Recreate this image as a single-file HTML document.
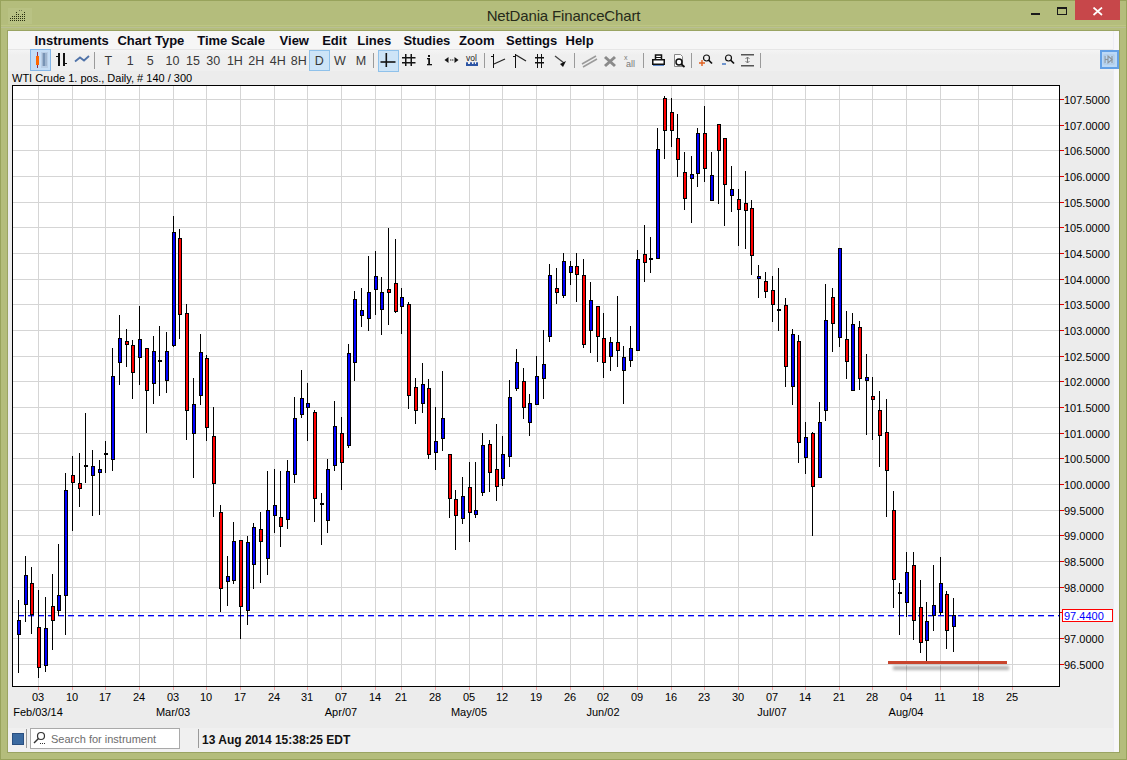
<!DOCTYPE html>
<html><head><meta charset="utf-8">
<style>
*{margin:0;padding:0;box-sizing:border-box}
html,body{width:1127px;height:760px;overflow:hidden;background:#b4bd7c;font-family:"Liberation Sans",sans-serif}
.abs{position:absolute}
#frame{position:absolute;left:0;top:0;width:1127px;height:760px;background:#b4bd7c;border:1px solid #98a35c}
#title{position:absolute;left:0;top:7px;width:1127px;text-align:center;font-size:15px;letter-spacing:-0.15px;color:#262a1a}
#client{position:absolute;left:8px;top:31px;width:1111px;height:721px;background:#ececec}
#menubar{position:absolute;left:8px;top:31px;width:1111px;height:19px;background:#f6f6f6;border-bottom:1px solid #e6e6e6}
#toolbar{position:absolute;left:8px;top:50px;width:1111px;height:21px;background:linear-gradient(#f4f4f4,#efefef 25%,#efefef)}
#status{position:absolute;left:8px;top:728px;width:1111px;height:24px;background:#f0f0f0}
.mi{position:absolute;top:33px;font-size:13px;font-weight:bold;color:#0a0a14;white-space:nowrap}
.tt{position:absolute;top:54px;font-size:12.5px;color:#383838;white-space:nowrap}
.sel{position:absolute;background:#cde4f7;border:1px solid #8fc1ea}
.sep{position:absolute;width:1px;background:#9a9a9a}
.yl{position:absolute;left:1064px;font-size:11px;color:#000;white-space:nowrap;line-height:14px}
.xl{position:absolute;top:690px;width:40px;text-align:center;font-size:11px;color:#000;line-height:14px}
.ml{position:absolute;top:705px;width:80px;text-align:center;font-size:11px;color:#000;line-height:14px}
#label{position:absolute;left:12px;top:72px;font-size:11px;color:#000;white-space:nowrap;line-height:12px}
</style></head><body>
<div id="frame"></div>
<div class="abs" style="left:7px;top:30px;width:1113px;height:723px;border:1px solid #9aa463"></div>
<div class="abs" style="left:1px;top:25px;width:1125px;height:1px;background:#bdc683"></div>
<div class="abs" style="left:1px;top:27px;width:1125px;height:1px;background:#b9bf94"></div>
<!-- title bar icon -->
<svg class="abs" style="left:0;top:0" width="34" height="26"><rect x="8" y="8" width="24" height="16" fill="#c3ca94" opacity="0.35"/><g fill="#2a3010"><rect x="10" y="20" width="1" height="1"/><rect x="12" y="20" width="1" height="1"/><rect x="14" y="20" width="1" height="1"/><rect x="16" y="20" width="1" height="1"/><rect x="18" y="20" width="1" height="1"/><rect x="20" y="20" width="1" height="1"/><rect x="22" y="20" width="1" height="1"/><rect x="24" y="20" width="1" height="1"/><rect x="10" y="18" width="1" height="1"/><rect x="12" y="18" width="1" height="1"/><rect x="14" y="18" width="1" height="1"/><rect x="16" y="18" width="1" height="1"/><rect x="18" y="18" width="1" height="1"/><rect x="20" y="18" width="1" height="1"/><rect x="22" y="18" width="1" height="1"/><rect x="24" y="18" width="1" height="1"/><rect x="12" y="16" width="1" height="1"/><rect x="14" y="16" width="1" height="1"/><rect x="16" y="16" width="1" height="1"/><rect x="18" y="16" width="1" height="1"/><rect x="20" y="16" width="1" height="1"/><rect x="22" y="16" width="1" height="1"/><rect x="24" y="16" width="1" height="1"/><rect x="16" y="14" width="1" height="1"/><rect x="18" y="14" width="1" height="1"/><rect x="22" y="14" width="1" height="1"/><rect x="24" y="14" width="1" height="1"/><rect x="16" y="12" width="1" height="1"/><rect x="24" y="12" width="1" height="1"/></g><g fill="#6f7750"><rect x="19" y="10" width="1" height="1"/><rect x="21" y="10" width="1" height="1"/></g></svg>
<div id="title">NetDania FinanceChart</div>
<!-- window buttons -->
<div class="abs" style="left:1031px;top:13px;width:9px;height:2px;background:#1a1a1a"></div>
<div class="abs" style="left:1057px;top:7px;width:10px;height:8px;border:1px solid #1a1a1a;border-top-width:2px"></div>
<div class="abs" style="left:1075px;top:0px;width:45px;height:20px;background:#c7474a"></div>
<svg class="abs" style="left:1092px;top:7px" width="12" height="9"><path d="M1.5 0.5 L10 8 M10 0.5 L1.5 8" stroke="#fff" stroke-width="1.7"/></svg>

<div id="client"></div>
<div id="status"></div>
<div id="menubar"></div>
<div id="toolbar"></div>
<div class="mi" style="left:34.4px">Instruments</div>
<div class="mi" style="left:117.4px">Chart Type</div>
<div class="mi" style="left:197.2px">Time Scale</div>
<div class="mi" style="left:279.6px">View</div>
<div class="mi" style="left:322.2px">Edit</div>
<div class="mi" style="left:357.3px">Lines</div>
<div class="mi" style="left:403.4px">Studies</div>
<div class="mi" style="left:459.1px">Zoom</div>
<div class="mi" style="left:506px">Settings</div>
<div class="mi" style="left:565.5px">Help</div>
<!-- toolbar -->
<div class="sel" style="left:30px;top:49px;width:21px;height:22px;background:#c5ddf6;border-color:#84b6e8"></div>
<svg class="abs" style="left:0;top:0" width="100" height="75">
<rect x="37" y="52" width="1" height="16" fill="#8a3050"/><rect x="36" y="56" width="3" height="9" fill="#ff6600"/>
<rect x="41" y="52" width="7" height="16" fill="#b9cde6"/><rect x="42" y="53" width="5" height="13" fill="#9fb5d0"/><rect x="43" y="53" width="2" height="13" fill="#7893b5"/>
<g fill="#111"><rect x="58" y="53" width="2" height="13"/><rect x="56" y="56" width="2" height="1"/><rect x="63" y="53" width="2" height="13"/><rect x="65" y="63" width="2" height="1"/></g>
<path d="M75 61.5 L80 57.5 L84 60.5 L89 56" stroke="#4f72a8" stroke-width="1.8" fill="none"/>
</svg>
<div class="sep" style="left:94px;top:52px;height:17px"></div>
<div class="sel" style="left:309px;top:50px;width:21px;height:21px"></div>
<div class="tt" style="left:104.5px">T</div>
<div class="tt" style="left:126.8px">1</div>
<div class="tt" style="left:146.8px">5</div>
<div class="tt" style="left:165.6px">10</div>
<div class="tt" style="left:186.0px">15</div>
<div class="tt" style="left:206.3px">30</div>
<div class="tt" style="left:226.9px">1H</div>
<div class="tt" style="left:248.3px">2H</div>
<div class="tt" style="left:269.8px">4H</div>
<div class="tt" style="left:290.7px">8H</div>
<div class="tt" style="left:314.7px">D</div>
<div class="tt" style="left:333.9px">W</div>
<div class="tt" style="left:355.8px">M</div>

<div class="sep" style="left:373px;top:53px;height:15px"></div>
<div class="sel" style="left:378px;top:50px;width:21px;height:22px"></div>
<svg class="abs" style="left:370px;top:46px" width="120" height="28">
<g fill="#141414">
<rect x="15.5" y="7" width="1.6" height="14"/><rect x="10.5" y="15.2" width="15" height="1.6"/>
<rect x="35" y="8" width="1.5" height="12"/><rect x="40.5" y="8" width="1.5" height="12"/><rect x="32" y="11" width="13.5" height="1.5"/><rect x="32" y="16" width="13.5" height="1.5"/>
<rect x="58" y="9" width="2" height="2"/><rect x="57" y="12" width="3" height="1.3"/><rect x="58.2" y="12" width="1.8" height="7"/><rect x="57" y="18" width="5" height="1.3"/>
<path d="M74.5 14 L78.5 11 L78.5 17 Z"/><path d="M88.5 14 L84.5 11 L84.5 17 Z"/><rect x="80.3" y="13" width="1" height="2" fill="#666"/><rect x="82.3" y="13" width="1" height="2" fill="#666"/>
</g>
<text x="96" y="14.5" font-family="Liberation Sans" font-size="8.5" fill="#1a1a1a">vol</text>
<g fill="#2d55a5"><rect x="96" y="18" width="12" height="2"/><rect x="96" y="16.3" width="2" height="2"/><rect x="100" y="16.3" width="2" height="2"/><rect x="103.5" y="16.3" width="1.5" height="2"/><rect x="106" y="16.3" width="2" height="2"/></g>
</svg>
<div class="sep" style="left:484px;top:53px;height:15px"></div>
<svg class="abs" style="left:490px;top:52px" width="80" height="17">
<g fill="#111" stroke="none">
<rect x="3" y="2" width="1" height="14"/><rect x="1" y="4" width="2" height="1"/>
<rect x="25" y="2" width="1" height="14"/><rect x="23" y="4" width="2" height="1"/>
<rect x="47" y="2" width="1" height="14"/><rect x="51" y="2" width="1" height="14"/><rect x="45" y="5" width="9" height="1.5"/><rect x="45" y="10" width="9" height="1.5"/>
</g>
<path d="M4 12 L15 7" stroke="#222" stroke-width="1.3"/>
<path d="M26 3 L36 9" stroke="#222" stroke-width="1.3"/>
<path d="M65 4 L74 11" stroke="#444" stroke-width="1.3"/><path d="M70 12 L76 9 L73 15 Z" fill="#111"/>
</svg>
<div class="sep" style="left:574px;top:53px;height:15px"></div>
<svg class="abs" style="left:580px;top:52px" width="60" height="17">
<path d="M2 12 L16 4 M3 15 L17 7" stroke="#9a9a9a" stroke-width="1.5"/>
<path d="M25 5 L35 14 M35 5 L25 14" stroke="#8a8a8a" stroke-width="3"/>
<text x="44" y="8" font-size="7" fill="#777" font-family="Liberation Sans">x</text>
<text x="46" y="15" font-size="9" fill="#777" font-family="Liberation Sans">all</text>
</svg>
<div class="sep" style="left:643px;top:53px;height:15px"></div>
<svg class="abs" style="left:650px;top:52px" width="40" height="17">
<rect x="5.5" y="3" width="6" height="5" fill="#fff" stroke="#111" stroke-width="1.5"/><rect x="2.75" y="7.75" width="11.5" height="4.5" fill="#fff" stroke="#111" stroke-width="1.5"/><rect x="6" y="5" width="5" height="1" fill="#111"/><rect x="3" y="13" width="11" height="1" fill="#5b86c8"/>
<path d="M24.5 2.5 L30.5 2.5 L32.5 4.5 L32.5 14.5 L24.5 14.5 Z" fill="#fafafa" stroke="#888"/><circle cx="29" cy="10" r="3" fill="#fff" stroke="#111" stroke-width="1.5"/><path d="M31 12 L34.5 15" stroke="#111" stroke-width="1.8"/>
</svg>
<div class="sep" style="left:691px;top:53px;height:15px"></div>
<svg class="abs" style="left:697px;top:52px" width="62" height="17">
<circle cx="9.5" cy="6" r="3" fill="none" stroke="#111" stroke-width="1.2"/><path d="M11.5 8 L15 11.5" stroke="#111" stroke-width="1.7"/><path d="M2 11 L8 11 M5 8 L5 14" stroke="#e06020" stroke-width="1.4"/>
<circle cx="31.5" cy="6" r="3" fill="none" stroke="#111" stroke-width="1.2"/><path d="M33.5 8 L37 11.5" stroke="#111" stroke-width="1.7"/><path d="M25 12 L29 12" stroke="#3a70c0" stroke-width="1.4"/>
<rect x="44" y="2" width="13" height="1.5" fill="#555"/><rect x="44" y="13" width="13" height="1.5" fill="#555"/><path d="M50.5 5 L50.5 11" stroke="#777"/><path d="M48.5 7 L50.5 5 L52.5 7 M48.5 9 L50.5 11 L52.5 9" stroke="#777" fill="none"/>
</svg>
<div class="sep" style="left:760px;top:53px;height:15px"></div>
<div class="abs" style="left:1113px;top:31px;width:6px;height:721px;background:#f7f7f9;border-left:1px solid #ececf4"></div>
<div class="sel" style="left:1100px;top:50px;width:19px;height:19px;background:#bcd9f6;border:2px solid #62a0e6"></div>
<svg class="abs" style="left:1100px;top:50px" width="19" height="19"><g stroke="#8d959c" fill="none" stroke-width="1.2"><path d="M5 6 L5 13"/><path d="M5 9.5 L8 9.5"/><path d="M8 6 L12 9.5 L8 13 Z"/><path d="M12 6 L12 13"/></g><rect x="4" y="5" width="10" height="9" fill="none" stroke="#a9c2dc" stroke-width="0.8"/></svg>

<div id="label">WTI Crude 1. pos., Daily, # 140 / 300</div>

<div class="abs" style="left:13px;top:86px;width:1046px;height:600px;background:#fff"></div>
<svg class="abs" style="left:0;top:0" width="1127" height="760" shape-rendering="crispEdges">
<defs><filter id="blur" x="-20%" y="-200%" width="140%" height="500%"><feGaussianBlur stdDeviation="1.5"/></filter></defs>
<rect x="38" y="86" width="1" height="600" fill="#d5d5d5"/>
<rect x="72" y="86" width="1" height="600" fill="#d5d5d5"/>
<rect x="105" y="86" width="1" height="600" fill="#d5d5d5"/>
<rect x="139" y="86" width="1" height="600" fill="#d5d5d5"/>
<rect x="173" y="86" width="1" height="600" fill="#d5d5d5"/>
<rect x="206" y="86" width="1" height="600" fill="#d5d5d5"/>
<rect x="240" y="86" width="1" height="600" fill="#d5d5d5"/>
<rect x="274" y="86" width="1" height="600" fill="#d5d5d5"/>
<rect x="307" y="86" width="1" height="600" fill="#d5d5d5"/>
<rect x="341" y="86" width="1" height="600" fill="#d5d5d5"/>
<rect x="375" y="86" width="1" height="600" fill="#d5d5d5"/>
<rect x="401" y="86" width="1" height="600" fill="#d5d5d5"/>
<rect x="435" y="86" width="1" height="600" fill="#d5d5d5"/>
<rect x="469" y="86" width="1" height="600" fill="#d5d5d5"/>
<rect x="502" y="86" width="1" height="600" fill="#d5d5d5"/>
<rect x="536" y="86" width="1" height="600" fill="#d5d5d5"/>
<rect x="570" y="86" width="1" height="600" fill="#d5d5d5"/>
<rect x="603" y="86" width="1" height="600" fill="#d5d5d5"/>
<rect x="637" y="86" width="1" height="600" fill="#d5d5d5"/>
<rect x="671" y="86" width="1" height="600" fill="#d5d5d5"/>
<rect x="704" y="86" width="1" height="600" fill="#d5d5d5"/>
<rect x="738" y="86" width="1" height="600" fill="#d5d5d5"/>
<rect x="772" y="86" width="1" height="600" fill="#d5d5d5"/>
<rect x="805" y="86" width="1" height="600" fill="#d5d5d5"/>
<rect x="839" y="86" width="1" height="600" fill="#d5d5d5"/>
<rect x="872" y="86" width="1" height="600" fill="#d5d5d5"/>
<rect x="906" y="86" width="1" height="600" fill="#d5d5d5"/>
<rect x="940" y="86" width="1" height="600" fill="#d5d5d5"/>
<rect x="978" y="86" width="1" height="600" fill="#d5d5d5"/>
<rect x="1012" y="86" width="1" height="600" fill="#d5d5d5"/>
<rect x="13" y="99" width="1046" height="1" fill="#d5d5d5"/>
<rect x="13" y="125" width="1046" height="1" fill="#d5d5d5"/>
<rect x="13" y="150" width="1046" height="1" fill="#d5d5d5"/>
<rect x="13" y="176" width="1046" height="1" fill="#d5d5d5"/>
<rect x="13" y="202" width="1046" height="1" fill="#d5d5d5"/>
<rect x="13" y="227" width="1046" height="1" fill="#d5d5d5"/>
<rect x="13" y="253" width="1046" height="1" fill="#d5d5d5"/>
<rect x="13" y="279" width="1046" height="1" fill="#d5d5d5"/>
<rect x="13" y="304" width="1046" height="1" fill="#d5d5d5"/>
<rect x="13" y="330" width="1046" height="1" fill="#d5d5d5"/>
<rect x="13" y="356" width="1046" height="1" fill="#d5d5d5"/>
<rect x="13" y="381" width="1046" height="1" fill="#d5d5d5"/>
<rect x="13" y="407" width="1046" height="1" fill="#d5d5d5"/>
<rect x="13" y="433" width="1046" height="1" fill="#d5d5d5"/>
<rect x="13" y="458" width="1046" height="1" fill="#d5d5d5"/>
<rect x="13" y="484" width="1046" height="1" fill="#d5d5d5"/>
<rect x="13" y="510" width="1046" height="1" fill="#d5d5d5"/>
<rect x="13" y="535" width="1046" height="1" fill="#d5d5d5"/>
<rect x="13" y="561" width="1046" height="1" fill="#d5d5d5"/>
<rect x="13" y="587" width="1046" height="1" fill="#d5d5d5"/>
<rect x="13" y="612" width="1046" height="1" fill="#d5d5d5"/>
<rect x="13" y="638" width="1046" height="1" fill="#d5d5d5"/>
<rect x="13" y="664" width="1046" height="1" fill="#d5d5d5"/>
<rect x="18" y="615" width="6" height="1" fill="#0000f0"/>
<rect x="18" y="616" width="6" height="1" fill="#0000ff" opacity="0.35"/>
<rect x="28" y="615" width="6" height="1" fill="#0000f0"/>
<rect x="28" y="616" width="6" height="1" fill="#0000ff" opacity="0.35"/>
<rect x="38" y="615" width="6" height="1" fill="#0000f0"/>
<rect x="38" y="616" width="6" height="1" fill="#0000ff" opacity="0.35"/>
<rect x="48" y="615" width="6" height="1" fill="#0000f0"/>
<rect x="48" y="616" width="6" height="1" fill="#0000ff" opacity="0.35"/>
<rect x="58" y="615" width="6" height="1" fill="#0000f0"/>
<rect x="58" y="616" width="6" height="1" fill="#0000ff" opacity="0.35"/>
<rect x="68" y="615" width="6" height="1" fill="#0000f0"/>
<rect x="68" y="616" width="6" height="1" fill="#0000ff" opacity="0.35"/>
<rect x="78" y="615" width="6" height="1" fill="#0000f0"/>
<rect x="78" y="616" width="6" height="1" fill="#0000ff" opacity="0.35"/>
<rect x="88" y="615" width="6" height="1" fill="#0000f0"/>
<rect x="88" y="616" width="6" height="1" fill="#0000ff" opacity="0.35"/>
<rect x="98" y="615" width="6" height="1" fill="#0000f0"/>
<rect x="98" y="616" width="6" height="1" fill="#0000ff" opacity="0.35"/>
<rect x="108" y="615" width="6" height="1" fill="#0000f0"/>
<rect x="108" y="616" width="6" height="1" fill="#0000ff" opacity="0.35"/>
<rect x="118" y="615" width="6" height="1" fill="#0000f0"/>
<rect x="118" y="616" width="6" height="1" fill="#0000ff" opacity="0.35"/>
<rect x="128" y="615" width="6" height="1" fill="#0000f0"/>
<rect x="128" y="616" width="6" height="1" fill="#0000ff" opacity="0.35"/>
<rect x="138" y="615" width="6" height="1" fill="#0000f0"/>
<rect x="138" y="616" width="6" height="1" fill="#0000ff" opacity="0.35"/>
<rect x="148" y="615" width="6" height="1" fill="#0000f0"/>
<rect x="148" y="616" width="6" height="1" fill="#0000ff" opacity="0.35"/>
<rect x="158" y="615" width="6" height="1" fill="#0000f0"/>
<rect x="158" y="616" width="6" height="1" fill="#0000ff" opacity="0.35"/>
<rect x="168" y="615" width="6" height="1" fill="#0000f0"/>
<rect x="168" y="616" width="6" height="1" fill="#0000ff" opacity="0.35"/>
<rect x="178" y="615" width="6" height="1" fill="#0000f0"/>
<rect x="178" y="616" width="6" height="1" fill="#0000ff" opacity="0.35"/>
<rect x="188" y="615" width="6" height="1" fill="#0000f0"/>
<rect x="188" y="616" width="6" height="1" fill="#0000ff" opacity="0.35"/>
<rect x="198" y="615" width="6" height="1" fill="#0000f0"/>
<rect x="198" y="616" width="6" height="1" fill="#0000ff" opacity="0.35"/>
<rect x="208" y="615" width="6" height="1" fill="#0000f0"/>
<rect x="208" y="616" width="6" height="1" fill="#0000ff" opacity="0.35"/>
<rect x="218" y="615" width="6" height="1" fill="#0000f0"/>
<rect x="218" y="616" width="6" height="1" fill="#0000ff" opacity="0.35"/>
<rect x="228" y="615" width="6" height="1" fill="#0000f0"/>
<rect x="228" y="616" width="6" height="1" fill="#0000ff" opacity="0.35"/>
<rect x="238" y="615" width="6" height="1" fill="#0000f0"/>
<rect x="238" y="616" width="6" height="1" fill="#0000ff" opacity="0.35"/>
<rect x="248" y="615" width="6" height="1" fill="#0000f0"/>
<rect x="248" y="616" width="6" height="1" fill="#0000ff" opacity="0.35"/>
<rect x="258" y="615" width="6" height="1" fill="#0000f0"/>
<rect x="258" y="616" width="6" height="1" fill="#0000ff" opacity="0.35"/>
<rect x="268" y="615" width="6" height="1" fill="#0000f0"/>
<rect x="268" y="616" width="6" height="1" fill="#0000ff" opacity="0.35"/>
<rect x="278" y="615" width="6" height="1" fill="#0000f0"/>
<rect x="278" y="616" width="6" height="1" fill="#0000ff" opacity="0.35"/>
<rect x="288" y="615" width="6" height="1" fill="#0000f0"/>
<rect x="288" y="616" width="6" height="1" fill="#0000ff" opacity="0.35"/>
<rect x="298" y="615" width="6" height="1" fill="#0000f0"/>
<rect x="298" y="616" width="6" height="1" fill="#0000ff" opacity="0.35"/>
<rect x="308" y="615" width="6" height="1" fill="#0000f0"/>
<rect x="308" y="616" width="6" height="1" fill="#0000ff" opacity="0.35"/>
<rect x="318" y="615" width="6" height="1" fill="#0000f0"/>
<rect x="318" y="616" width="6" height="1" fill="#0000ff" opacity="0.35"/>
<rect x="328" y="615" width="6" height="1" fill="#0000f0"/>
<rect x="328" y="616" width="6" height="1" fill="#0000ff" opacity="0.35"/>
<rect x="338" y="615" width="6" height="1" fill="#0000f0"/>
<rect x="338" y="616" width="6" height="1" fill="#0000ff" opacity="0.35"/>
<rect x="348" y="615" width="6" height="1" fill="#0000f0"/>
<rect x="348" y="616" width="6" height="1" fill="#0000ff" opacity="0.35"/>
<rect x="358" y="615" width="6" height="1" fill="#0000f0"/>
<rect x="358" y="616" width="6" height="1" fill="#0000ff" opacity="0.35"/>
<rect x="368" y="615" width="6" height="1" fill="#0000f0"/>
<rect x="368" y="616" width="6" height="1" fill="#0000ff" opacity="0.35"/>
<rect x="378" y="615" width="6" height="1" fill="#0000f0"/>
<rect x="378" y="616" width="6" height="1" fill="#0000ff" opacity="0.35"/>
<rect x="388" y="615" width="6" height="1" fill="#0000f0"/>
<rect x="388" y="616" width="6" height="1" fill="#0000ff" opacity="0.35"/>
<rect x="398" y="615" width="6" height="1" fill="#0000f0"/>
<rect x="398" y="616" width="6" height="1" fill="#0000ff" opacity="0.35"/>
<rect x="408" y="615" width="6" height="1" fill="#0000f0"/>
<rect x="408" y="616" width="6" height="1" fill="#0000ff" opacity="0.35"/>
<rect x="418" y="615" width="6" height="1" fill="#0000f0"/>
<rect x="418" y="616" width="6" height="1" fill="#0000ff" opacity="0.35"/>
<rect x="428" y="615" width="6" height="1" fill="#0000f0"/>
<rect x="428" y="616" width="6" height="1" fill="#0000ff" opacity="0.35"/>
<rect x="438" y="615" width="6" height="1" fill="#0000f0"/>
<rect x="438" y="616" width="6" height="1" fill="#0000ff" opacity="0.35"/>
<rect x="448" y="615" width="6" height="1" fill="#0000f0"/>
<rect x="448" y="616" width="6" height="1" fill="#0000ff" opacity="0.35"/>
<rect x="458" y="615" width="6" height="1" fill="#0000f0"/>
<rect x="458" y="616" width="6" height="1" fill="#0000ff" opacity="0.35"/>
<rect x="468" y="615" width="6" height="1" fill="#0000f0"/>
<rect x="468" y="616" width="6" height="1" fill="#0000ff" opacity="0.35"/>
<rect x="478" y="615" width="6" height="1" fill="#0000f0"/>
<rect x="478" y="616" width="6" height="1" fill="#0000ff" opacity="0.35"/>
<rect x="488" y="615" width="6" height="1" fill="#0000f0"/>
<rect x="488" y="616" width="6" height="1" fill="#0000ff" opacity="0.35"/>
<rect x="498" y="615" width="6" height="1" fill="#0000f0"/>
<rect x="498" y="616" width="6" height="1" fill="#0000ff" opacity="0.35"/>
<rect x="508" y="615" width="6" height="1" fill="#0000f0"/>
<rect x="508" y="616" width="6" height="1" fill="#0000ff" opacity="0.35"/>
<rect x="518" y="615" width="6" height="1" fill="#0000f0"/>
<rect x="518" y="616" width="6" height="1" fill="#0000ff" opacity="0.35"/>
<rect x="528" y="615" width="6" height="1" fill="#0000f0"/>
<rect x="528" y="616" width="6" height="1" fill="#0000ff" opacity="0.35"/>
<rect x="538" y="615" width="6" height="1" fill="#0000f0"/>
<rect x="538" y="616" width="6" height="1" fill="#0000ff" opacity="0.35"/>
<rect x="548" y="615" width="6" height="1" fill="#0000f0"/>
<rect x="548" y="616" width="6" height="1" fill="#0000ff" opacity="0.35"/>
<rect x="558" y="615" width="6" height="1" fill="#0000f0"/>
<rect x="558" y="616" width="6" height="1" fill="#0000ff" opacity="0.35"/>
<rect x="568" y="615" width="6" height="1" fill="#0000f0"/>
<rect x="568" y="616" width="6" height="1" fill="#0000ff" opacity="0.35"/>
<rect x="578" y="615" width="6" height="1" fill="#0000f0"/>
<rect x="578" y="616" width="6" height="1" fill="#0000ff" opacity="0.35"/>
<rect x="588" y="615" width="6" height="1" fill="#0000f0"/>
<rect x="588" y="616" width="6" height="1" fill="#0000ff" opacity="0.35"/>
<rect x="598" y="615" width="6" height="1" fill="#0000f0"/>
<rect x="598" y="616" width="6" height="1" fill="#0000ff" opacity="0.35"/>
<rect x="608" y="615" width="6" height="1" fill="#0000f0"/>
<rect x="608" y="616" width="6" height="1" fill="#0000ff" opacity="0.35"/>
<rect x="618" y="615" width="6" height="1" fill="#0000f0"/>
<rect x="618" y="616" width="6" height="1" fill="#0000ff" opacity="0.35"/>
<rect x="628" y="615" width="6" height="1" fill="#0000f0"/>
<rect x="628" y="616" width="6" height="1" fill="#0000ff" opacity="0.35"/>
<rect x="638" y="615" width="6" height="1" fill="#0000f0"/>
<rect x="638" y="616" width="6" height="1" fill="#0000ff" opacity="0.35"/>
<rect x="648" y="615" width="6" height="1" fill="#0000f0"/>
<rect x="648" y="616" width="6" height="1" fill="#0000ff" opacity="0.35"/>
<rect x="658" y="615" width="6" height="1" fill="#0000f0"/>
<rect x="658" y="616" width="6" height="1" fill="#0000ff" opacity="0.35"/>
<rect x="668" y="615" width="6" height="1" fill="#0000f0"/>
<rect x="668" y="616" width="6" height="1" fill="#0000ff" opacity="0.35"/>
<rect x="678" y="615" width="6" height="1" fill="#0000f0"/>
<rect x="678" y="616" width="6" height="1" fill="#0000ff" opacity="0.35"/>
<rect x="688" y="615" width="6" height="1" fill="#0000f0"/>
<rect x="688" y="616" width="6" height="1" fill="#0000ff" opacity="0.35"/>
<rect x="698" y="615" width="6" height="1" fill="#0000f0"/>
<rect x="698" y="616" width="6" height="1" fill="#0000ff" opacity="0.35"/>
<rect x="708" y="615" width="6" height="1" fill="#0000f0"/>
<rect x="708" y="616" width="6" height="1" fill="#0000ff" opacity="0.35"/>
<rect x="718" y="615" width="6" height="1" fill="#0000f0"/>
<rect x="718" y="616" width="6" height="1" fill="#0000ff" opacity="0.35"/>
<rect x="728" y="615" width="6" height="1" fill="#0000f0"/>
<rect x="728" y="616" width="6" height="1" fill="#0000ff" opacity="0.35"/>
<rect x="738" y="615" width="6" height="1" fill="#0000f0"/>
<rect x="738" y="616" width="6" height="1" fill="#0000ff" opacity="0.35"/>
<rect x="748" y="615" width="6" height="1" fill="#0000f0"/>
<rect x="748" y="616" width="6" height="1" fill="#0000ff" opacity="0.35"/>
<rect x="758" y="615" width="6" height="1" fill="#0000f0"/>
<rect x="758" y="616" width="6" height="1" fill="#0000ff" opacity="0.35"/>
<rect x="768" y="615" width="6" height="1" fill="#0000f0"/>
<rect x="768" y="616" width="6" height="1" fill="#0000ff" opacity="0.35"/>
<rect x="778" y="615" width="6" height="1" fill="#0000f0"/>
<rect x="778" y="616" width="6" height="1" fill="#0000ff" opacity="0.35"/>
<rect x="788" y="615" width="6" height="1" fill="#0000f0"/>
<rect x="788" y="616" width="6" height="1" fill="#0000ff" opacity="0.35"/>
<rect x="798" y="615" width="6" height="1" fill="#0000f0"/>
<rect x="798" y="616" width="6" height="1" fill="#0000ff" opacity="0.35"/>
<rect x="808" y="615" width="6" height="1" fill="#0000f0"/>
<rect x="808" y="616" width="6" height="1" fill="#0000ff" opacity="0.35"/>
<rect x="818" y="615" width="6" height="1" fill="#0000f0"/>
<rect x="818" y="616" width="6" height="1" fill="#0000ff" opacity="0.35"/>
<rect x="828" y="615" width="6" height="1" fill="#0000f0"/>
<rect x="828" y="616" width="6" height="1" fill="#0000ff" opacity="0.35"/>
<rect x="838" y="615" width="6" height="1" fill="#0000f0"/>
<rect x="838" y="616" width="6" height="1" fill="#0000ff" opacity="0.35"/>
<rect x="848" y="615" width="6" height="1" fill="#0000f0"/>
<rect x="848" y="616" width="6" height="1" fill="#0000ff" opacity="0.35"/>
<rect x="858" y="615" width="6" height="1" fill="#0000f0"/>
<rect x="858" y="616" width="6" height="1" fill="#0000ff" opacity="0.35"/>
<rect x="868" y="615" width="6" height="1" fill="#0000f0"/>
<rect x="868" y="616" width="6" height="1" fill="#0000ff" opacity="0.35"/>
<rect x="878" y="615" width="6" height="1" fill="#0000f0"/>
<rect x="878" y="616" width="6" height="1" fill="#0000ff" opacity="0.35"/>
<rect x="888" y="615" width="6" height="1" fill="#0000f0"/>
<rect x="888" y="616" width="6" height="1" fill="#0000ff" opacity="0.35"/>
<rect x="898" y="615" width="6" height="1" fill="#0000f0"/>
<rect x="898" y="616" width="6" height="1" fill="#0000ff" opacity="0.35"/>
<rect x="908" y="615" width="6" height="1" fill="#0000f0"/>
<rect x="908" y="616" width="6" height="1" fill="#0000ff" opacity="0.35"/>
<rect x="918" y="615" width="6" height="1" fill="#0000f0"/>
<rect x="918" y="616" width="6" height="1" fill="#0000ff" opacity="0.35"/>
<rect x="928" y="615" width="6" height="1" fill="#0000f0"/>
<rect x="928" y="616" width="6" height="1" fill="#0000ff" opacity="0.35"/>
<rect x="938" y="615" width="6" height="1" fill="#0000f0"/>
<rect x="938" y="616" width="6" height="1" fill="#0000ff" opacity="0.35"/>
<rect x="948" y="615" width="6" height="1" fill="#0000f0"/>
<rect x="948" y="616" width="6" height="1" fill="#0000ff" opacity="0.35"/>
<rect x="958" y="615" width="6" height="1" fill="#0000f0"/>
<rect x="958" y="616" width="6" height="1" fill="#0000ff" opacity="0.35"/>
<rect x="968" y="615" width="6" height="1" fill="#0000f0"/>
<rect x="968" y="616" width="6" height="1" fill="#0000ff" opacity="0.35"/>
<rect x="978" y="615" width="6" height="1" fill="#0000f0"/>
<rect x="978" y="616" width="6" height="1" fill="#0000ff" opacity="0.35"/>
<rect x="988" y="615" width="6" height="1" fill="#0000f0"/>
<rect x="988" y="616" width="6" height="1" fill="#0000ff" opacity="0.35"/>
<rect x="998" y="615" width="6" height="1" fill="#0000f0"/>
<rect x="998" y="616" width="6" height="1" fill="#0000ff" opacity="0.35"/>
<rect x="1008" y="615" width="6" height="1" fill="#0000f0"/>
<rect x="1008" y="616" width="6" height="1" fill="#0000ff" opacity="0.35"/>
<rect x="1018" y="615" width="6" height="1" fill="#0000f0"/>
<rect x="1018" y="616" width="6" height="1" fill="#0000ff" opacity="0.35"/>
<rect x="1028" y="615" width="6" height="1" fill="#0000f0"/>
<rect x="1028" y="616" width="6" height="1" fill="#0000ff" opacity="0.35"/>
<rect x="1038" y="615" width="6" height="1" fill="#0000f0"/>
<rect x="1038" y="616" width="6" height="1" fill="#0000ff" opacity="0.35"/>
<rect x="1048" y="615" width="6" height="1" fill="#0000f0"/>
<rect x="1048" y="616" width="6" height="1" fill="#0000ff" opacity="0.35"/>
<rect x="1058" y="615" width="1" height="1" fill="#0000f0"/>
<rect x="1058" y="616" width="1" height="1" fill="#0000ff" opacity="0.35"/>
<rect x="18" y="600" width="1" height="73" fill="#000"/>
<rect x="17" y="620" width="4" height="15" fill="#000"/>
<rect x="18" y="621" width="2" height="13" fill="#0000ff"/>
<rect x="25" y="556" width="1" height="66" fill="#000"/>
<rect x="24" y="575" width="4" height="30" fill="#000"/>
<rect x="25" y="576" width="2" height="28" fill="#0000ff"/>
<rect x="31" y="567" width="1" height="67" fill="#000"/>
<rect x="30" y="583" width="4" height="32" fill="#000"/>
<rect x="31" y="584" width="2" height="30" fill="#ff0000"/>
<rect x="38" y="590" width="1" height="88" fill="#000"/>
<rect x="37" y="627" width="4" height="41" fill="#000"/>
<rect x="38" y="628" width="2" height="39" fill="#ff0000"/>
<rect x="45" y="597" width="1" height="75" fill="#000"/>
<rect x="44" y="628" width="4" height="38" fill="#000"/>
<rect x="45" y="629" width="2" height="36" fill="#0000ff"/>
<rect x="52" y="574" width="1" height="76" fill="#000"/>
<rect x="51" y="606" width="4" height="15" fill="#000"/>
<rect x="52" y="607" width="2" height="13" fill="#ff0000"/>
<rect x="58" y="544" width="1" height="72" fill="#000"/>
<rect x="57" y="595" width="4" height="16" fill="#000"/>
<rect x="58" y="596" width="2" height="14" fill="#0000ff"/>
<rect x="65" y="473" width="1" height="162" fill="#000"/>
<rect x="64" y="490" width="4" height="106" fill="#000"/>
<rect x="65" y="491" width="2" height="104" fill="#0000ff"/>
<rect x="72" y="456" width="1" height="75" fill="#000"/>
<rect x="71" y="475" width="4" height="8" fill="#000"/>
<rect x="72" y="476" width="2" height="6" fill="#ff0000"/>
<rect x="79" y="453" width="1" height="54" fill="#000"/>
<rect x="78" y="483" width="4" height="6" fill="#000"/>
<rect x="79" y="484" width="2" height="4" fill="#ff0000"/>
<rect x="85" y="413" width="1" height="70" fill="#000"/>
<rect x="84" y="465" width="4" height="2" fill="#000"/>
<rect x="92" y="450" width="1" height="66" fill="#000"/>
<rect x="91" y="466" width="4" height="10" fill="#000"/>
<rect x="92" y="467" width="2" height="8" fill="#0000ff"/>
<rect x="99" y="460" width="1" height="55" fill="#000"/>
<rect x="98" y="469" width="4" height="4" fill="#000"/>
<rect x="99" y="470" width="2" height="2" fill="#0000ff"/>
<rect x="105" y="441" width="1" height="32" fill="#000"/>
<rect x="104" y="453" width="4" height="2" fill="#000"/>
<rect x="112" y="348" width="1" height="123" fill="#000"/>
<rect x="111" y="376" width="4" height="84" fill="#000"/>
<rect x="112" y="377" width="2" height="82" fill="#0000ff"/>
<rect x="119" y="315" width="1" height="70" fill="#000"/>
<rect x="118" y="338" width="4" height="25" fill="#000"/>
<rect x="119" y="339" width="2" height="23" fill="#0000ff"/>
<rect x="126" y="329" width="1" height="38" fill="#000"/>
<rect x="125" y="341" width="4" height="4" fill="#000"/>
<rect x="126" y="342" width="2" height="2" fill="#ff0000"/>
<rect x="132" y="340" width="1" height="59" fill="#000"/>
<rect x="131" y="345" width="4" height="28" fill="#000"/>
<rect x="132" y="346" width="2" height="26" fill="#ff0000"/>
<rect x="139" y="306" width="1" height="79" fill="#000"/>
<rect x="138" y="339" width="4" height="19" fill="#000"/>
<rect x="139" y="340" width="2" height="17" fill="#0000ff"/>
<rect x="146" y="348" width="1" height="85" fill="#000"/>
<rect x="145" y="348" width="4" height="43" fill="#000"/>
<rect x="146" y="349" width="2" height="41" fill="#ff0000"/>
<rect x="153" y="336" width="1" height="68" fill="#000"/>
<rect x="152" y="351" width="4" height="33" fill="#000"/>
<rect x="153" y="352" width="2" height="31" fill="#0000ff"/>
<rect x="159" y="326" width="1" height="70" fill="#000"/>
<rect x="158" y="360" width="4" height="2" fill="#000"/>
<rect x="166" y="332" width="1" height="61" fill="#000"/>
<rect x="165" y="351" width="4" height="30" fill="#000"/>
<rect x="166" y="352" width="2" height="28" fill="#0000ff"/>
<rect x="173" y="216" width="1" height="131" fill="#000"/>
<rect x="172" y="232" width="4" height="114" fill="#000"/>
<rect x="173" y="233" width="2" height="112" fill="#0000ff"/>
<rect x="179" y="229" width="1" height="110" fill="#000"/>
<rect x="178" y="238" width="4" height="77" fill="#000"/>
<rect x="179" y="239" width="2" height="75" fill="#ff0000"/>
<rect x="186" y="304" width="1" height="136" fill="#000"/>
<rect x="185" y="313" width="4" height="98" fill="#000"/>
<rect x="186" y="314" width="2" height="96" fill="#ff0000"/>
<rect x="193" y="378" width="1" height="100" fill="#000"/>
<rect x="192" y="404" width="4" height="30" fill="#000"/>
<rect x="193" y="405" width="2" height="28" fill="#0000ff"/>
<rect x="200" y="334" width="1" height="71" fill="#000"/>
<rect x="199" y="352" width="4" height="44" fill="#000"/>
<rect x="200" y="353" width="2" height="42" fill="#0000ff"/>
<rect x="206" y="355" width="1" height="86" fill="#000"/>
<rect x="205" y="358" width="4" height="70" fill="#000"/>
<rect x="206" y="359" width="2" height="68" fill="#ff0000"/>
<rect x="213" y="407" width="1" height="110" fill="#000"/>
<rect x="212" y="436" width="4" height="48" fill="#000"/>
<rect x="213" y="437" width="2" height="46" fill="#ff0000"/>
<rect x="220" y="505" width="1" height="107" fill="#000"/>
<rect x="219" y="512" width="4" height="77" fill="#000"/>
<rect x="220" y="513" width="2" height="75" fill="#ff0000"/>
<rect x="227" y="556" width="1" height="50" fill="#000"/>
<rect x="226" y="576" width="4" height="6" fill="#000"/>
<rect x="227" y="577" width="2" height="4" fill="#0000ff"/>
<rect x="233" y="522" width="1" height="62" fill="#000"/>
<rect x="232" y="541" width="4" height="40" fill="#000"/>
<rect x="233" y="542" width="2" height="38" fill="#0000ff"/>
<rect x="240" y="540" width="1" height="99" fill="#000"/>
<rect x="239" y="540" width="4" height="67" fill="#000"/>
<rect x="240" y="541" width="2" height="65" fill="#ff0000"/>
<rect x="247" y="536" width="1" height="89" fill="#000"/>
<rect x="246" y="542" width="4" height="69" fill="#000"/>
<rect x="247" y="543" width="2" height="67" fill="#0000ff"/>
<rect x="253" y="523" width="1" height="66" fill="#000"/>
<rect x="252" y="527" width="4" height="38" fill="#000"/>
<rect x="253" y="528" width="2" height="36" fill="#0000ff"/>
<rect x="260" y="512" width="1" height="71" fill="#000"/>
<rect x="259" y="529" width="4" height="13" fill="#000"/>
<rect x="260" y="530" width="2" height="11" fill="#ff0000"/>
<rect x="267" y="471" width="1" height="104" fill="#000"/>
<rect x="266" y="510" width="4" height="49" fill="#000"/>
<rect x="267" y="511" width="2" height="47" fill="#0000ff"/>
<rect x="274" y="469" width="1" height="64" fill="#000"/>
<rect x="273" y="505" width="4" height="11" fill="#000"/>
<rect x="274" y="506" width="2" height="9" fill="#0000ff"/>
<rect x="280" y="471" width="1" height="76" fill="#000"/>
<rect x="279" y="517" width="4" height="10" fill="#000"/>
<rect x="280" y="518" width="2" height="8" fill="#ff0000"/>
<rect x="287" y="460" width="1" height="69" fill="#000"/>
<rect x="286" y="471" width="4" height="49" fill="#000"/>
<rect x="287" y="472" width="2" height="47" fill="#0000ff"/>
<rect x="294" y="397" width="1" height="86" fill="#000"/>
<rect x="293" y="418" width="4" height="57" fill="#000"/>
<rect x="294" y="419" width="2" height="55" fill="#0000ff"/>
<rect x="301" y="370" width="1" height="48" fill="#000"/>
<rect x="300" y="398" width="4" height="17" fill="#000"/>
<rect x="301" y="399" width="2" height="15" fill="#0000ff"/>
<rect x="307" y="383" width="1" height="58" fill="#000"/>
<rect x="306" y="403" width="4" height="5" fill="#000"/>
<rect x="307" y="404" width="2" height="3" fill="#0000ff"/>
<rect x="314" y="410" width="1" height="112" fill="#000"/>
<rect x="313" y="412" width="4" height="87" fill="#000"/>
<rect x="314" y="413" width="2" height="85" fill="#ff0000"/>
<rect x="321" y="493" width="1" height="52" fill="#000"/>
<rect x="320" y="503" width="4" height="2" fill="#000"/>
<rect x="327" y="459" width="1" height="74" fill="#000"/>
<rect x="326" y="469" width="4" height="52" fill="#000"/>
<rect x="327" y="470" width="2" height="50" fill="#0000ff"/>
<rect x="334" y="401" width="1" height="70" fill="#000"/>
<rect x="333" y="426" width="4" height="40" fill="#000"/>
<rect x="334" y="427" width="2" height="38" fill="#0000ff"/>
<rect x="341" y="417" width="1" height="73" fill="#000"/>
<rect x="340" y="433" width="4" height="30" fill="#000"/>
<rect x="341" y="434" width="2" height="28" fill="#ff0000"/>
<rect x="348" y="344" width="1" height="104" fill="#000"/>
<rect x="347" y="353" width="4" height="93" fill="#000"/>
<rect x="348" y="354" width="2" height="91" fill="#0000ff"/>
<rect x="354" y="291" width="1" height="90" fill="#000"/>
<rect x="353" y="299" width="4" height="64" fill="#000"/>
<rect x="354" y="300" width="2" height="62" fill="#0000ff"/>
<rect x="361" y="288" width="1" height="39" fill="#000"/>
<rect x="360" y="310" width="4" height="6" fill="#000"/>
<rect x="361" y="311" width="2" height="4" fill="#0000ff"/>
<rect x="368" y="256" width="1" height="75" fill="#000"/>
<rect x="367" y="292" width="4" height="27" fill="#000"/>
<rect x="368" y="293" width="2" height="25" fill="#0000ff"/>
<rect x="375" y="251" width="1" height="64" fill="#000"/>
<rect x="374" y="276" width="4" height="14" fill="#000"/>
<rect x="375" y="277" width="2" height="12" fill="#0000ff"/>
<rect x="381" y="277" width="1" height="58" fill="#000"/>
<rect x="380" y="292" width="4" height="18" fill="#000"/>
<rect x="381" y="293" width="2" height="16" fill="#0000ff"/>
<rect x="388" y="228" width="1" height="97" fill="#000"/>
<rect x="387" y="289" width="4" height="4" fill="#000"/>
<rect x="388" y="290" width="2" height="2" fill="#ff0000"/>
<rect x="395" y="239" width="1" height="74" fill="#000"/>
<rect x="394" y="283" width="4" height="29" fill="#000"/>
<rect x="395" y="284" width="2" height="27" fill="#ff0000"/>
<rect x="401" y="288" width="1" height="46" fill="#000"/>
<rect x="400" y="297" width="4" height="10" fill="#000"/>
<rect x="401" y="298" width="2" height="8" fill="#0000ff"/>
<rect x="408" y="302" width="1" height="107" fill="#000"/>
<rect x="407" y="304" width="4" height="92" fill="#000"/>
<rect x="408" y="305" width="2" height="90" fill="#ff0000"/>
<rect x="415" y="378" width="1" height="46" fill="#000"/>
<rect x="414" y="387" width="4" height="24" fill="#000"/>
<rect x="415" y="388" width="2" height="22" fill="#ff0000"/>
<rect x="422" y="363" width="1" height="50" fill="#000"/>
<rect x="421" y="384" width="4" height="20" fill="#000"/>
<rect x="422" y="385" width="2" height="18" fill="#0000ff"/>
<rect x="428" y="379" width="1" height="80" fill="#000"/>
<rect x="427" y="388" width="4" height="67" fill="#000"/>
<rect x="428" y="389" width="2" height="65" fill="#ff0000"/>
<rect x="435" y="407" width="1" height="63" fill="#000"/>
<rect x="434" y="441" width="4" height="12" fill="#000"/>
<rect x="435" y="442" width="2" height="10" fill="#0000ff"/>
<rect x="442" y="371" width="1" height="80" fill="#000"/>
<rect x="441" y="418" width="4" height="21" fill="#000"/>
<rect x="442" y="419" width="2" height="19" fill="#0000ff"/>
<rect x="449" y="454" width="1" height="64" fill="#000"/>
<rect x="448" y="454" width="4" height="45" fill="#000"/>
<rect x="449" y="455" width="2" height="43" fill="#ff0000"/>
<rect x="455" y="490" width="1" height="60" fill="#000"/>
<rect x="454" y="499" width="4" height="17" fill="#000"/>
<rect x="455" y="500" width="2" height="15" fill="#ff0000"/>
<rect x="462" y="477" width="1" height="47" fill="#000"/>
<rect x="461" y="496" width="4" height="23" fill="#000"/>
<rect x="462" y="497" width="2" height="21" fill="#0000ff"/>
<rect x="469" y="462" width="1" height="80" fill="#000"/>
<rect x="468" y="487" width="4" height="26" fill="#000"/>
<rect x="469" y="488" width="2" height="24" fill="#ff0000"/>
<rect x="475" y="462" width="1" height="56" fill="#000"/>
<rect x="474" y="510" width="4" height="5" fill="#000"/>
<rect x="475" y="511" width="2" height="3" fill="#0000ff"/>
<rect x="482" y="433" width="1" height="63" fill="#000"/>
<rect x="481" y="445" width="4" height="48" fill="#000"/>
<rect x="482" y="446" width="2" height="46" fill="#0000ff"/>
<rect x="489" y="440" width="1" height="52" fill="#000"/>
<rect x="488" y="444" width="4" height="29" fill="#000"/>
<rect x="489" y="445" width="2" height="27" fill="#ff0000"/>
<rect x="496" y="424" width="1" height="77" fill="#000"/>
<rect x="495" y="469" width="4" height="18" fill="#000"/>
<rect x="496" y="470" width="2" height="16" fill="#ff0000"/>
<rect x="502" y="436" width="1" height="50" fill="#000"/>
<rect x="501" y="454" width="4" height="25" fill="#000"/>
<rect x="502" y="455" width="2" height="23" fill="#0000ff"/>
<rect x="509" y="380" width="1" height="87" fill="#000"/>
<rect x="508" y="397" width="4" height="60" fill="#000"/>
<rect x="509" y="398" width="2" height="58" fill="#0000ff"/>
<rect x="516" y="349" width="1" height="42" fill="#000"/>
<rect x="515" y="362" width="4" height="27" fill="#000"/>
<rect x="516" y="363" width="2" height="25" fill="#0000ff"/>
<rect x="523" y="368" width="1" height="51" fill="#000"/>
<rect x="522" y="381" width="4" height="27" fill="#000"/>
<rect x="523" y="382" width="2" height="25" fill="#ff0000"/>
<rect x="529" y="394" width="1" height="42" fill="#000"/>
<rect x="528" y="403" width="4" height="20" fill="#000"/>
<rect x="529" y="404" width="2" height="18" fill="#0000ff"/>
<rect x="536" y="356" width="1" height="49" fill="#000"/>
<rect x="535" y="376" width="4" height="29" fill="#000"/>
<rect x="536" y="377" width="2" height="27" fill="#0000ff"/>
<rect x="543" y="330" width="1" height="69" fill="#000"/>
<rect x="542" y="364" width="4" height="15" fill="#000"/>
<rect x="543" y="365" width="2" height="13" fill="#0000ff"/>
<rect x="549" y="264" width="1" height="78" fill="#000"/>
<rect x="548" y="275" width="4" height="62" fill="#000"/>
<rect x="549" y="276" width="2" height="60" fill="#0000ff"/>
<rect x="556" y="268" width="1" height="36" fill="#000"/>
<rect x="555" y="288" width="4" height="5" fill="#000"/>
<rect x="556" y="289" width="2" height="3" fill="#ff0000"/>
<rect x="563" y="253" width="1" height="45" fill="#000"/>
<rect x="562" y="261" width="4" height="35" fill="#000"/>
<rect x="563" y="262" width="2" height="33" fill="#0000ff"/>
<rect x="570" y="261" width="1" height="24" fill="#000"/>
<rect x="569" y="266" width="4" height="7" fill="#000"/>
<rect x="570" y="267" width="2" height="5" fill="#0000ff"/>
<rect x="576" y="253" width="1" height="49" fill="#000"/>
<rect x="575" y="266" width="4" height="9" fill="#000"/>
<rect x="576" y="267" width="2" height="7" fill="#ff0000"/>
<rect x="583" y="259" width="1" height="89" fill="#000"/>
<rect x="582" y="275" width="4" height="70" fill="#000"/>
<rect x="583" y="276" width="2" height="68" fill="#ff0000"/>
<rect x="590" y="282" width="1" height="71" fill="#000"/>
<rect x="589" y="300" width="4" height="31" fill="#000"/>
<rect x="590" y="301" width="2" height="29" fill="#0000ff"/>
<rect x="597" y="306" width="1" height="56" fill="#000"/>
<rect x="596" y="306" width="4" height="31" fill="#000"/>
<rect x="597" y="307" width="2" height="29" fill="#ff0000"/>
<rect x="603" y="313" width="1" height="65" fill="#000"/>
<rect x="602" y="338" width="4" height="25" fill="#000"/>
<rect x="603" y="339" width="2" height="23" fill="#ff0000"/>
<rect x="610" y="337" width="1" height="34" fill="#000"/>
<rect x="609" y="342" width="4" height="15" fill="#000"/>
<rect x="610" y="343" width="2" height="13" fill="#0000ff"/>
<rect x="617" y="296" width="1" height="71" fill="#000"/>
<rect x="616" y="342" width="4" height="9" fill="#000"/>
<rect x="617" y="343" width="2" height="7" fill="#ff0000"/>
<rect x="623" y="346" width="1" height="58" fill="#000"/>
<rect x="622" y="357" width="4" height="14" fill="#000"/>
<rect x="623" y="358" width="2" height="12" fill="#0000ff"/>
<rect x="630" y="326" width="1" height="41" fill="#000"/>
<rect x="629" y="348" width="4" height="13" fill="#000"/>
<rect x="630" y="349" width="2" height="11" fill="#0000ff"/>
<rect x="637" y="250" width="1" height="101" fill="#000"/>
<rect x="636" y="259" width="4" height="92" fill="#000"/>
<rect x="637" y="260" width="2" height="90" fill="#0000ff"/>
<rect x="644" y="225" width="1" height="57" fill="#000"/>
<rect x="643" y="254" width="4" height="9" fill="#000"/>
<rect x="644" y="255" width="2" height="7" fill="#ff0000"/>
<rect x="650" y="237" width="1" height="36" fill="#000"/>
<rect x="649" y="258" width="4" height="2" fill="#000"/>
<rect x="657" y="128" width="1" height="131" fill="#000"/>
<rect x="656" y="149" width="4" height="110" fill="#000"/>
<rect x="657" y="150" width="2" height="108" fill="#0000ff"/>
<rect x="664" y="96" width="1" height="63" fill="#000"/>
<rect x="663" y="98" width="4" height="33" fill="#000"/>
<rect x="664" y="99" width="2" height="31" fill="#ff0000"/>
<rect x="671" y="98" width="1" height="49" fill="#000"/>
<rect x="670" y="112" width="4" height="19" fill="#000"/>
<rect x="671" y="113" width="2" height="17" fill="#ff0000"/>
<rect x="677" y="114" width="1" height="63" fill="#000"/>
<rect x="676" y="138" width="4" height="22" fill="#000"/>
<rect x="677" y="139" width="2" height="20" fill="#ff0000"/>
<rect x="684" y="152" width="1" height="58" fill="#000"/>
<rect x="683" y="172" width="4" height="27" fill="#000"/>
<rect x="684" y="173" width="2" height="25" fill="#ff0000"/>
<rect x="691" y="156" width="1" height="67" fill="#000"/>
<rect x="690" y="174" width="4" height="5" fill="#000"/>
<rect x="691" y="175" width="2" height="3" fill="#0000ff"/>
<rect x="697" y="128" width="1" height="59" fill="#000"/>
<rect x="696" y="133" width="4" height="41" fill="#000"/>
<rect x="697" y="134" width="2" height="39" fill="#0000ff"/>
<rect x="704" y="106" width="1" height="76" fill="#000"/>
<rect x="703" y="133" width="4" height="36" fill="#000"/>
<rect x="704" y="134" width="2" height="34" fill="#ff0000"/>
<rect x="711" y="152" width="1" height="49" fill="#000"/>
<rect x="710" y="175" width="4" height="26" fill="#000"/>
<rect x="711" y="176" width="2" height="24" fill="#0000ff"/>
<rect x="718" y="124" width="1" height="80" fill="#000"/>
<rect x="717" y="124" width="4" height="27" fill="#000"/>
<rect x="718" y="125" width="2" height="25" fill="#ff0000"/>
<rect x="724" y="138" width="1" height="88" fill="#000"/>
<rect x="723" y="138" width="4" height="47" fill="#000"/>
<rect x="724" y="139" width="2" height="45" fill="#ff0000"/>
<rect x="731" y="166" width="1" height="46" fill="#000"/>
<rect x="730" y="189" width="4" height="7" fill="#000"/>
<rect x="731" y="190" width="2" height="5" fill="#0000ff"/>
<rect x="738" y="189" width="1" height="57" fill="#000"/>
<rect x="737" y="199" width="4" height="11" fill="#000"/>
<rect x="738" y="200" width="2" height="9" fill="#ff0000"/>
<rect x="745" y="171" width="1" height="78" fill="#000"/>
<rect x="744" y="203" width="4" height="8" fill="#000"/>
<rect x="745" y="204" width="2" height="6" fill="#ff0000"/>
<rect x="751" y="200" width="1" height="75" fill="#000"/>
<rect x="750" y="208" width="4" height="48" fill="#000"/>
<rect x="751" y="209" width="2" height="46" fill="#ff0000"/>
<rect x="758" y="265" width="1" height="33" fill="#000"/>
<rect x="757" y="276" width="4" height="3" fill="#000"/>
<rect x="758" y="277" width="2" height="1" fill="#0000ff"/>
<rect x="765" y="272" width="1" height="26" fill="#000"/>
<rect x="764" y="281" width="4" height="11" fill="#000"/>
<rect x="765" y="282" width="2" height="9" fill="#ff0000"/>
<rect x="772" y="276" width="1" height="46" fill="#000"/>
<rect x="771" y="290" width="4" height="15" fill="#000"/>
<rect x="772" y="291" width="2" height="13" fill="#ff0000"/>
<rect x="778" y="268" width="1" height="63" fill="#000"/>
<rect x="777" y="309" width="4" height="2" fill="#000"/>
<rect x="785" y="298" width="1" height="89" fill="#000"/>
<rect x="784" y="305" width="4" height="62" fill="#000"/>
<rect x="785" y="306" width="2" height="60" fill="#ff0000"/>
<rect x="792" y="329" width="1" height="76" fill="#000"/>
<rect x="791" y="334" width="4" height="53" fill="#000"/>
<rect x="792" y="335" width="2" height="51" fill="#0000ff"/>
<rect x="798" y="335" width="1" height="128" fill="#000"/>
<rect x="797" y="341" width="4" height="102" fill="#000"/>
<rect x="798" y="342" width="2" height="100" fill="#ff0000"/>
<rect x="805" y="422" width="1" height="52" fill="#000"/>
<rect x="804" y="437" width="4" height="21" fill="#000"/>
<rect x="805" y="438" width="2" height="19" fill="#0000ff"/>
<rect x="812" y="432" width="1" height="104" fill="#000"/>
<rect x="811" y="433" width="4" height="54" fill="#000"/>
<rect x="812" y="434" width="2" height="52" fill="#ff0000"/>
<rect x="819" y="402" width="1" height="76" fill="#000"/>
<rect x="818" y="422" width="4" height="56" fill="#000"/>
<rect x="819" y="423" width="2" height="54" fill="#0000ff"/>
<rect x="825" y="284" width="1" height="137" fill="#000"/>
<rect x="824" y="320" width="4" height="91" fill="#000"/>
<rect x="825" y="321" width="2" height="89" fill="#0000ff"/>
<rect x="832" y="288" width="1" height="64" fill="#000"/>
<rect x="831" y="297" width="4" height="27" fill="#000"/>
<rect x="832" y="298" width="2" height="25" fill="#ff0000"/>
<rect x="839" y="248" width="1" height="99" fill="#000"/>
<rect x="838" y="248" width="4" height="90" fill="#000"/>
<rect x="839" y="249" width="2" height="88" fill="#0000ff"/>
<rect x="846" y="311" width="1" height="68" fill="#000"/>
<rect x="845" y="339" width="4" height="23" fill="#000"/>
<rect x="846" y="340" width="2" height="21" fill="#ff0000"/>
<rect x="852" y="313" width="1" height="78" fill="#000"/>
<rect x="851" y="324" width="4" height="67" fill="#000"/>
<rect x="852" y="325" width="2" height="65" fill="#0000ff"/>
<rect x="859" y="321" width="1" height="69" fill="#000"/>
<rect x="858" y="327" width="4" height="52" fill="#000"/>
<rect x="859" y="328" width="2" height="50" fill="#ff0000"/>
<rect x="866" y="354" width="1" height="81" fill="#000"/>
<rect x="865" y="377" width="4" height="4" fill="#000"/>
<rect x="866" y="378" width="2" height="2" fill="#0000ff"/>
<rect x="872" y="377" width="1" height="63" fill="#000"/>
<rect x="871" y="396" width="4" height="4" fill="#000"/>
<rect x="872" y="397" width="2" height="2" fill="#ff0000"/>
<rect x="879" y="391" width="1" height="76" fill="#000"/>
<rect x="878" y="410" width="4" height="26" fill="#000"/>
<rect x="879" y="411" width="2" height="24" fill="#ff0000"/>
<rect x="886" y="399" width="1" height="118" fill="#000"/>
<rect x="885" y="432" width="4" height="39" fill="#000"/>
<rect x="886" y="433" width="2" height="37" fill="#ff0000"/>
<rect x="893" y="491" width="1" height="117" fill="#000"/>
<rect x="892" y="510" width="4" height="70" fill="#000"/>
<rect x="893" y="511" width="2" height="68" fill="#ff0000"/>
<rect x="899" y="583" width="1" height="52" fill="#000"/>
<rect x="898" y="592" width="4" height="2" fill="#000"/>
<rect x="906" y="552" width="1" height="65" fill="#000"/>
<rect x="905" y="572" width="4" height="31" fill="#000"/>
<rect x="906" y="573" width="2" height="29" fill="#0000ff"/>
<rect x="913" y="552" width="1" height="88" fill="#000"/>
<rect x="912" y="565" width="4" height="56" fill="#000"/>
<rect x="913" y="566" width="2" height="54" fill="#ff0000"/>
<rect x="920" y="580" width="1" height="73" fill="#000"/>
<rect x="919" y="607" width="4" height="36" fill="#000"/>
<rect x="920" y="608" width="2" height="34" fill="#ff0000"/>
<rect x="926" y="602" width="1" height="60" fill="#000"/>
<rect x="925" y="621" width="4" height="20" fill="#000"/>
<rect x="926" y="622" width="2" height="18" fill="#0000ff"/>
<rect x="933" y="565" width="1" height="66" fill="#000"/>
<rect x="932" y="605" width="4" height="11" fill="#000"/>
<rect x="933" y="606" width="2" height="9" fill="#0000ff"/>
<rect x="940" y="557" width="1" height="58" fill="#000"/>
<rect x="939" y="583" width="4" height="30" fill="#000"/>
<rect x="940" y="584" width="2" height="28" fill="#0000ff"/>
<rect x="946" y="591" width="1" height="58" fill="#000"/>
<rect x="945" y="594" width="4" height="37" fill="#000"/>
<rect x="946" y="595" width="2" height="35" fill="#ff0000"/>
<rect x="953" y="598" width="1" height="54" fill="#000"/>
<rect x="952" y="615" width="4" height="12" fill="#000"/>
<rect x="953" y="616" width="2" height="10" fill="#0000ff"/>
<rect x="893" y="666" width="116" height="4" fill="#000" opacity="0.3" filter="url(#blur)"/>
<rect x="888" y="661" width="119" height="3" fill="#c9452d"/>
<rect x="12.5" y="85.5" width="1047" height="601" fill="none" stroke="#000" stroke-width="1"/>
<rect x="1060" y="99" width="4" height="1" fill="#e00000"/>
<rect x="1060" y="125" width="4" height="1" fill="#e00000"/>
<rect x="1060" y="150" width="4" height="1" fill="#e00000"/>
<rect x="1060" y="176" width="4" height="1" fill="#e00000"/>
<rect x="1060" y="202" width="4" height="1" fill="#e00000"/>
<rect x="1060" y="227" width="4" height="1" fill="#e00000"/>
<rect x="1060" y="253" width="4" height="1" fill="#e00000"/>
<rect x="1060" y="279" width="4" height="1" fill="#e00000"/>
<rect x="1060" y="304" width="4" height="1" fill="#e00000"/>
<rect x="1060" y="330" width="4" height="1" fill="#e00000"/>
<rect x="1060" y="356" width="4" height="1" fill="#e00000"/>
<rect x="1060" y="381" width="4" height="1" fill="#e00000"/>
<rect x="1060" y="407" width="4" height="1" fill="#e00000"/>
<rect x="1060" y="433" width="4" height="1" fill="#e00000"/>
<rect x="1060" y="458" width="4" height="1" fill="#e00000"/>
<rect x="1060" y="484" width="4" height="1" fill="#e00000"/>
<rect x="1060" y="510" width="4" height="1" fill="#e00000"/>
<rect x="1060" y="535" width="4" height="1" fill="#e00000"/>
<rect x="1060" y="561" width="4" height="1" fill="#e00000"/>
<rect x="1060" y="587" width="4" height="1" fill="#e00000"/>
<rect x="1060" y="612" width="4" height="1" fill="#e00000"/>
<rect x="1060" y="638" width="4" height="1" fill="#e00000"/>
<rect x="1060" y="664" width="4" height="1" fill="#e00000"/>
<rect x="38" y="687" width="1" height="3" fill="#f2a0a0"/>
<rect x="72" y="687" width="1" height="3" fill="#f2a0a0"/>
<rect x="105" y="687" width="1" height="3" fill="#f2a0a0"/>
<rect x="139" y="687" width="1" height="3" fill="#f2a0a0"/>
<rect x="173" y="687" width="1" height="3" fill="#f2a0a0"/>
<rect x="206" y="687" width="1" height="3" fill="#f2a0a0"/>
<rect x="240" y="687" width="1" height="3" fill="#f2a0a0"/>
<rect x="274" y="687" width="1" height="3" fill="#f2a0a0"/>
<rect x="307" y="687" width="1" height="3" fill="#f2a0a0"/>
<rect x="341" y="687" width="1" height="3" fill="#f2a0a0"/>
<rect x="375" y="687" width="1" height="3" fill="#f2a0a0"/>
<rect x="401" y="687" width="1" height="3" fill="#f2a0a0"/>
<rect x="435" y="687" width="1" height="3" fill="#f2a0a0"/>
<rect x="469" y="687" width="1" height="3" fill="#f2a0a0"/>
<rect x="502" y="687" width="1" height="3" fill="#f2a0a0"/>
<rect x="536" y="687" width="1" height="3" fill="#f2a0a0"/>
<rect x="570" y="687" width="1" height="3" fill="#f2a0a0"/>
<rect x="603" y="687" width="1" height="3" fill="#f2a0a0"/>
<rect x="637" y="687" width="1" height="3" fill="#f2a0a0"/>
<rect x="671" y="687" width="1" height="3" fill="#f2a0a0"/>
<rect x="704" y="687" width="1" height="3" fill="#f2a0a0"/>
<rect x="738" y="687" width="1" height="3" fill="#f2a0a0"/>
<rect x="772" y="687" width="1" height="3" fill="#f2a0a0"/>
<rect x="805" y="687" width="1" height="3" fill="#f2a0a0"/>
<rect x="839" y="687" width="1" height="3" fill="#f2a0a0"/>
<rect x="872" y="687" width="1" height="3" fill="#f2a0a0"/>
<rect x="906" y="687" width="1" height="3" fill="#f2a0a0"/>
<rect x="940" y="687" width="1" height="3" fill="#f2a0a0"/>
<rect x="978" y="687" width="1" height="3" fill="#f2a0a0"/>
<rect x="1012" y="687" width="1" height="3" fill="#f2a0a0"/>
</svg>
<div class="yl" style="top:93px">107.5000</div>
<div class="yl" style="top:119px">107.0000</div>
<div class="yl" style="top:144px">106.5000</div>
<div class="yl" style="top:170px">106.0000</div>
<div class="yl" style="top:196px">105.5000</div>
<div class="yl" style="top:221px">105.0000</div>
<div class="yl" style="top:247px">104.5000</div>
<div class="yl" style="top:273px">104.0000</div>
<div class="yl" style="top:298px">103.5000</div>
<div class="yl" style="top:324px">103.0000</div>
<div class="yl" style="top:350px">102.5000</div>
<div class="yl" style="top:375px">102.0000</div>
<div class="yl" style="top:401px">101.5000</div>
<div class="yl" style="top:427px">101.0000</div>
<div class="yl" style="top:452px">100.5000</div>
<div class="yl" style="top:478px">100.0000</div>
<div class="yl" style="top:504px">99.5000</div>
<div class="yl" style="top:529px">99.0000</div>
<div class="yl" style="top:555px">98.5000</div>
<div class="yl" style="top:581px">98.0000</div>
<div class="yl" style="top:606px">97.5000</div>
<div class="yl" style="top:632px">97.0000</div>
<div class="yl" style="top:658px">96.5000</div>
<div class="xl" style="left:18.0px">03</div>
<div class="xl" style="left:52.0px">10</div>
<div class="xl" style="left:85.0px">17</div>
<div class="xl" style="left:119.0px">24</div>
<div class="xl" style="left:153.0px">03</div>
<div class="xl" style="left:186.0px">10</div>
<div class="xl" style="left:220.0px">17</div>
<div class="xl" style="left:254.0px">24</div>
<div class="xl" style="left:287.0px">31</div>
<div class="xl" style="left:321.0px">07</div>
<div class="xl" style="left:355.0px">14</div>
<div class="xl" style="left:381.0px">21</div>
<div class="xl" style="left:415.0px">28</div>
<div class="xl" style="left:449.0px">05</div>
<div class="xl" style="left:482.0px">12</div>
<div class="xl" style="left:516.0px">19</div>
<div class="xl" style="left:550.0px">26</div>
<div class="xl" style="left:583.0px">02</div>
<div class="xl" style="left:617.0px">09</div>
<div class="xl" style="left:651.0px">16</div>
<div class="xl" style="left:684.0px">23</div>
<div class="xl" style="left:718.0px">30</div>
<div class="xl" style="left:752.0px">07</div>
<div class="xl" style="left:785.0px">14</div>
<div class="xl" style="left:819.0px">21</div>
<div class="xl" style="left:852.0px">28</div>
<div class="xl" style="left:886.0px">04</div>
<div class="xl" style="left:920.0px">11</div>
<div class="xl" style="left:958.0px">18</div>
<div class="xl" style="left:992.0px">25</div>
<div class="ml" style="left:-2.0px">Feb/03/14</div>
<div class="ml" style="left:133.0px">Mar/03</div>
<div class="ml" style="left:301.0px">Apr/07</div>
<div class="ml" style="left:429.0px">May/05</div>
<div class="ml" style="left:563.0px">Jun/02</div>
<div class="ml" style="left:732.0px">Jul/07</div>
<div class="ml" style="left:866.0px">Aug/04</div>
<div class="abs" style="left:1062px;top:609px;width:51px;height:13px;border:1px solid #ff0000;background:#fff"></div>
<div class="yl" style="top:609px;color:#0000ff">97.4400</div>


<!-- status bar -->
<div class="abs" style="left:12px;top:733px;width:12px;height:12px;background:#3b6aa0;border:1px solid #2a4f80"></div>
<div class="sep" style="left:26px;top:729px;height:19px"></div>
<div class="abs" style="left:30px;top:728px;width:150px;height:21px;background:#fff;border:1px solid #a9a9a9"></div>
<svg class="abs" style="left:32px;top:731px" width="16" height="15"><circle cx="9" cy="5" r="3.5" fill="none" stroke="#333" stroke-width="1.2"/><path d="M6.5 7.5 L2 12" stroke="#333" stroke-width="1.5"/><rect x="8" y="12" width="1" height="1" fill="#333"/><rect x="10" y="12" width="1" height="1" fill="#333"/><rect x="12" y="12" width="1" height="1" fill="#333"/></svg>
<div class="abs" style="left:51px;top:733px;font-size:11px;color:#6d6d6d;white-space:nowrap">Search for instrument</div>
<div class="sep" style="left:198px;top:729px;height:19px"></div>
<div class="abs" style="left:202px;top:733px;font-size:12px;font-weight:bold;color:#111;white-space:nowrap">13 Aug 2014 15:38:25 EDT</div>
</body></html>
